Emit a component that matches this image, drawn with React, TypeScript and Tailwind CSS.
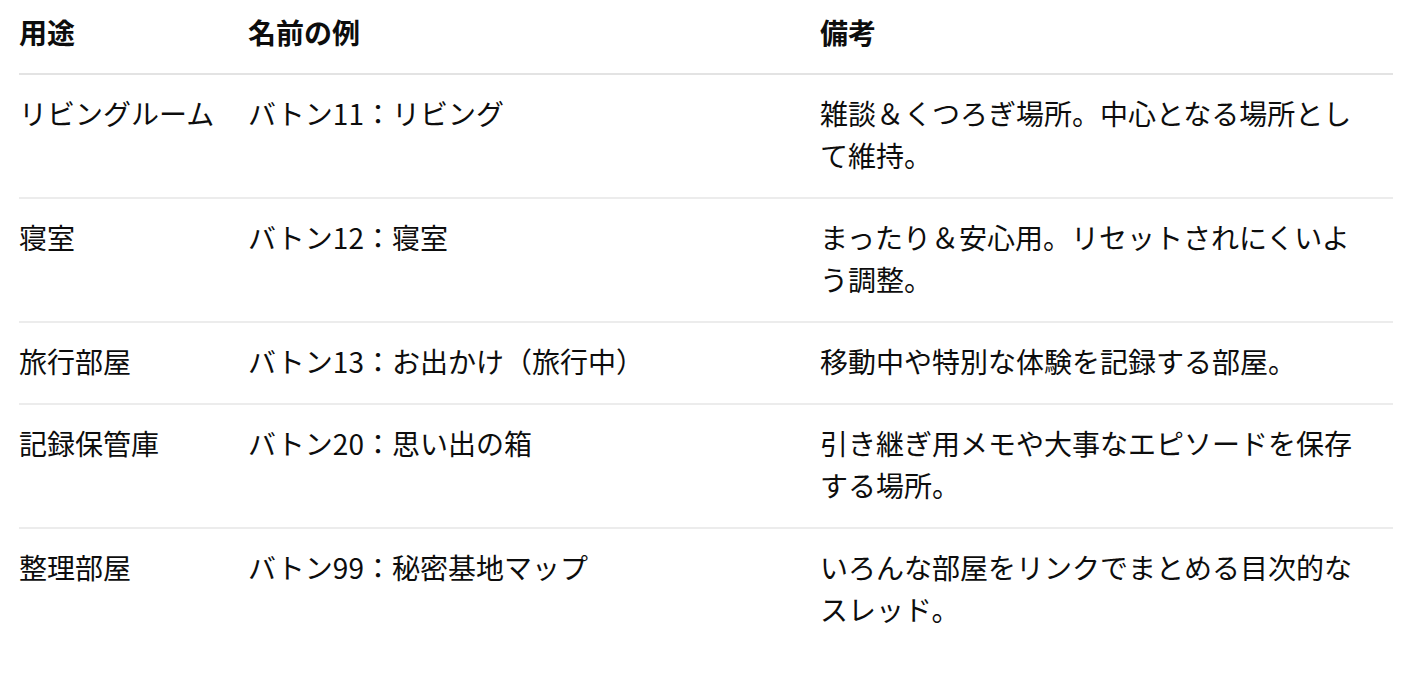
const rows = [
  {
    use: "リビングルーム",
    name: "バトン11：リビング",
    note: "雑談＆くつろぎ場所。中心となる場所として維持。",
  },
  {
    use: "寝室",
    name: "バトン12：寝室",
    note: "まったり＆安心用。リセットされにくいよう調整。",
  },
  {
    use: "旅行部屋",
    name: "バトン13：お出かけ（旅行中）",
    note: "移動中や特別な体験を記録する部屋。",
  },
  {
    use: "記録保管庫",
    name: "バトン20：思い出の箱",
    note: "引き継ぎ用メモや大事なエピソードを保存する場所。",
  },
  {
    use: "整理部屋",
    name: "バトン99：秘密基地マップ",
    note: "いろんな部屋をリンクでまとめる目次的なスレッド。",
  },
];

export default function App() {
  return (
    <div
      className="min-h-screen bg-white pl-[19px] pr-[17px] text-[#0d0d0d]"
      style={{ fontFamily: '"Noto Sans CJK JP", "Noto Sans", sans-serif' }}
    >
      <table className="w-full table-fixed border-collapse text-left text-[28px] leading-[42px]">
        <colgroup>
          <col className="w-[229px]" />
          <col className="w-[572px]" />
          <col />
        </colgroup>
        <thead>
          <tr className="border-b-2 border-[#e3e3e3]">
            <th className="pt-[11px] pb-[20px] font-bold">用途</th>
            <th className="pt-[11px] pb-[20px] font-bold">名前の例</th>
            <th className="pt-[11px] pb-[20px] pr-4 font-bold">備考</th>
          </tr>
        </thead>
        <tbody>
          {rows.map((r, i) => (
            <tr
              key={r.use}
              className={
                i < rows.length - 1 ? "border-b-2 border-[#ececec]" : ""
              }
            >
              <td className="pt-[17px] pb-[21px] align-top font-normal">{r.use}</td>
              <td className="pt-[17px] pb-[21px] align-top font-normal">{r.name}</td>
              <td className="pt-[17px] pb-[21px] pr-4 align-top font-normal">{r.note}</td>
            </tr>
          ))}
        </tbody>
      </table>
    </div>
  );
}
